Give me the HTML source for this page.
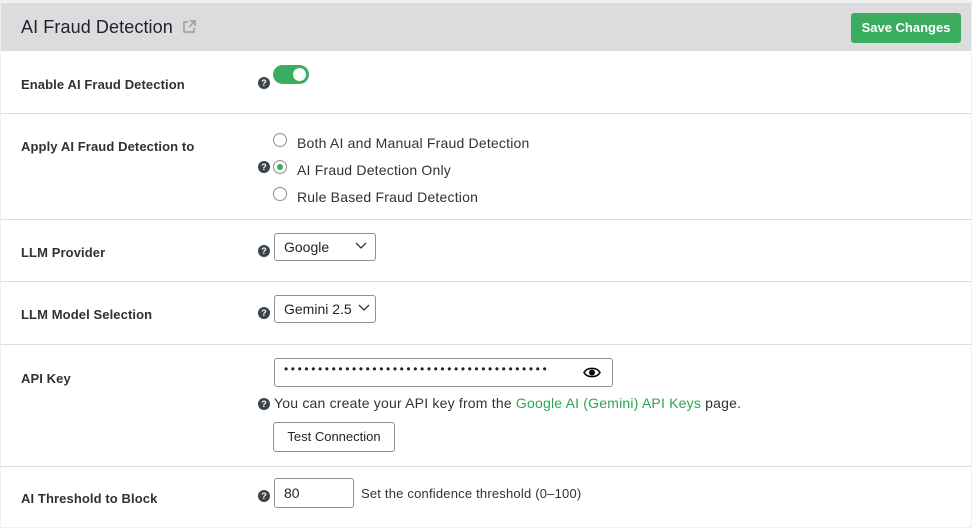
<!DOCTYPE html><html><head><style>
body{margin:0;width:972px;height:528px;background:#f0f0f1;font-family:"Liberation Sans",sans-serif;color:#1d2327;overflow:hidden;position:relative}
.box{position:absolute;left:1px;top:3px;width:970px;height:524px;background:#fff}
.hdr{position:absolute;left:0;top:0;width:970px;height:48px;background:#dcdcde}
.t{position:absolute;left:20px;top:14px;font-size:18px;letter-spacing:0.1px}
.btn{position:absolute;left:850px;top:10px;width:110px;height:30px;background:#3bad5f;border-radius:3px;color:#fff;font-size:13px;font-weight:bold;text-align:center;line-height:30px}
.sep{position:absolute;left:0;width:970px;height:1px;background:#dcdcde}
.lab{position:absolute;left:20px;font-size:13px;font-weight:bold;color:#2c3338;letter-spacing:0.1px}
.q{position:absolute;left:257px;width:12px;height:12px;border-radius:50%;background:#3c434a;color:#fff;font-size:9px;font-weight:bold;text-align:center;line-height:12px}
.tx{position:absolute;font-size:14px;color:#2c3338;letter-spacing:0.2px}
.r{position:absolute;left:272px;width:14px;height:14px;border:1px solid #8c8f94;border-radius:50%;box-sizing:border-box}
.sel{position:absolute;left:273px;width:102px;height:28px;border:1px solid #8c8f94;border-radius:3px;box-sizing:border-box;font-size:14px;padding-left:9px;line-height:26px}
.chev{position:absolute;right:8px;top:8px}
</style></head><body><div class="box">
<div class="hdr"><div class="t">AI Fraud Detection <svg width="14" height="14" viewBox="0 0 14 14" style="margin-left:4px;vertical-align:-1px"><path d="M6 2H2v10h10V8M8 1h5v5M13 1L7 7" fill="none" stroke="#999" stroke-width="1.4"/></svg></div><div class="btn">Save Changes</div></div>
<div class="lab" style="top:74px">Enable AI Fraud Detection</div>
<div class="q" style="top:74px">?</div>
<div style="position:absolute;left:272px;top:62px;width:36px;height:19px;border-radius:10px;background:#3bad5f"><div style="position:absolute;right:3px;top:3px;width:13px;height:13px;border-radius:50%;background:#fff"></div></div>
<div class="sep" style="top:110px"></div>
<div class="lab" style="top:136px">Apply AI Fraud Detection to</div>
<div class="r" style="top:130px"></div><div class="tx" style="left:296px;top:132px">Both AI and Manual Fraud Detection</div>
<div class="q" style="top:158px">?</div>
<div class="r" style="top:157px"><div style="position:absolute;left:3px;top:3px;width:6px;height:6px;border-radius:50%;background:#3bad5f"></div></div><div class="tx" style="left:296px;top:159px">AI Fraud Detection Only</div>
<div class="r" style="top:184px"></div><div class="tx" style="left:296px;top:186px">Rule Based Fraud Detection</div>
<div class="sep" style="top:216px"></div>
<div class="lab" style="top:242px">LLM Provider</div>
<div class="q" style="top:242px">?</div>
<div class="sel" style="top:230px">Google<svg class="chev" width="12" height="8" viewBox="0 0 12 8"><path d="M1 1l5 5 5-5" fill="none" stroke="#2c3338" stroke-width="1.3"/></svg></div>
<div class="sep" style="top:278px"></div>
<div class="lab" style="top:304px">LLM Model Selection</div>
<div class="q" style="top:304px">?</div>
<div class="sel" style="top:292px">Gemini 2.5<svg class="chev" width="12" height="8" viewBox="0 0 12 8" style="right:5px"><path d="M1 1l5 5 5-5" fill="none" stroke="#2c3338" stroke-width="1.3"/></svg></div>
<div class="sep" style="top:341px"></div>
<div class="lab" style="top:368px">API Key</div>
<div style="position:absolute;left:273px;top:355px;width:339px;height:29px;border:1px solid #8c8f94;border-radius:3px;box-sizing:border-box"><div style="position:absolute;left:9px;top:3px;font-size:12px;letter-spacing:2.6px">•••••••••••••••••••••••••••••••••••••••</div>
<svg style="position:absolute;left:308px;top:7px" width="18" height="13" viewBox="0 0 18 13"><path d="M1 6.5C4 1 14 1 17 6.5 14 12 4 12 1 6.5Z" fill="none" stroke="#000" stroke-width="1.6"/><circle cx="9" cy="6.5" r="3" fill="#000"/></svg></div>
<div class="q" style="top:395px">?</div>
<div class="tx" style="left:273px;top:392px">You can create your API key from the <span style="color:#2ea44f">Google AI (Gemini) API Keys</span> page.</div>
<div style="position:absolute;left:272px;top:419px;width:122px;height:30px;border:1px solid #8c8f94;border-radius:3px;box-sizing:border-box;font-size:13px;text-align:center;line-height:28px">Test Connection</div>
<div class="sep" style="top:463px"></div>
<div class="lab" style="top:488px">AI Threshold to Block</div>
<div class="q" style="top:487px">?</div>
<div style="position:absolute;left:273px;top:475px;width:80px;height:30px;border:1px solid #8c8f94;border-radius:3px;box-sizing:border-box;font-size:14px;padding-left:9px;line-height:28px">80</div>
<div class="tx" style="left:360px;top:483px;font-size:13px">Set the confidence threshold (0–100)</div>
</div></body></html>
